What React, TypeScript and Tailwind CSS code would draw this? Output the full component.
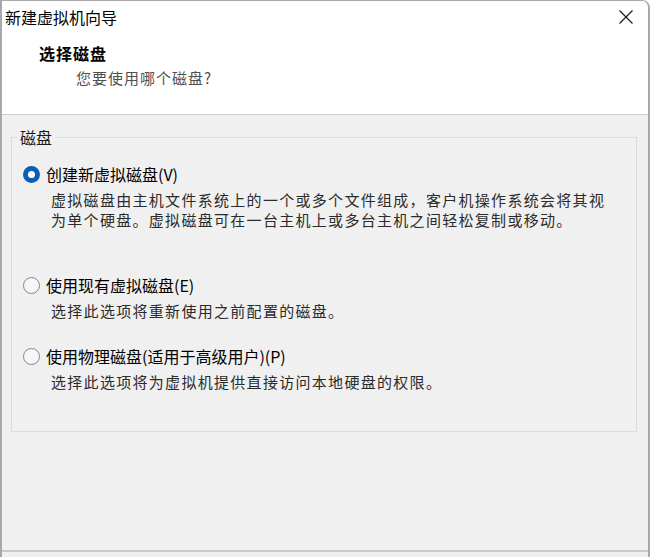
import { useState } from 'react'

type Choice = {
  id: string
  label: string
  desc: string[]
}

const choices: Choice[] = [
  {
    id: 'new',
    label: '创建新虚拟磁盘(V)',
    desc: [
      '虚拟磁盘由主机文件系统上的一个或多个文件组成，客户机操作系统会将其视',
      '为单个硬盘。虚拟磁盘可在一台主机上或多台主机之间轻松复制或移动。',
    ],
  },
  {
    id: 'existing',
    label: '使用现有虚拟磁盘(E)',
    desc: ['选择此选项将重新使用之前配置的磁盘。'],
  },
  {
    id: 'physical',
    label: '使用物理磁盘(适用于高级用户)(P)',
    desc: ['选择此选项将为虚拟机提供直接访问本地硬盘的权限。'],
  },
]

// gap above each radio row, taken from the screenshot
const rowTop: Record<string, string> = {
  new: 'mt-0',
  existing: 'mt-[44px]',
  physical: 'mt-[24px]',
}

function Radio({ checked }: { checked: boolean }) {
  return checked ? (
    <span className="w-[17px] h-[17px] rounded-full bg-[#0a5fb4] flex items-center justify-center shrink-0">
      <span className="w-[7px] h-[7px] rounded-full bg-white" />
    </span>
  ) : (
    <span className="w-[17px] h-[17px] rounded-full border border-[#858585] bg-[#f7f7f7] shrink-0" />
  )
}

export default function App() {
  const [selected, setSelected] = useState('new')

  return (
    <div
      className="w-[650px] h-[557px] flex flex-col bg-[#f0f0f0] border-l-2 border-r-2 border-t border-[#a8a8a8] rounded-tr-[8px] overflow-hidden text-black"
      style={{ fontFamily: '"Noto Sans CJK SC", "Noto Sans", sans-serif' }}
    >
      {/* Header */}
      <div className="h-[114px] bg-white border-b border-[#cfcfcf] relative shrink-0">
        <div className="flex items-center justify-between h-[32px] pl-[3px] pr-[14px]">
          <span className="text-[16px] leading-[22px]">新建虚拟机向导</span>
          <svg width="16" height="16" viewBox="0 0 16 16" className="text-[#1a1a1a]">
            <path d="M1.5 1.5 L14.5 14.5 M14.5 1.5 L1.5 14.5" stroke="currentColor" strokeWidth="1.2" fill="none" />
          </svg>
        </div>
        <div className="pl-[37px] mt-[9px] text-[16px] leading-[22px] font-bold tracking-[1px]">选择磁盘</div>
        <div className="pl-[74px] mt-[3px] text-[15px] leading-[22px] tracking-[1px] text-[#505050]">
          您要使用哪个磁盘?
        </div>
      </div>

      {/* Body */}
      <div className="flex-1 flex flex-col">
        <fieldset className="mt-[11px] ml-[9px] w-[626px] border border-[#dcdcdc] pt-[15px] pb-[39px] px-0">
          <legend className="ml-[5px] px-[3px] text-[16px] leading-[22px] text-[#1a1a1a]">磁盘</legend>

          {choices.map(c => (
            <div key={c.id} className={rowTop[c.id]}>
              <button
                type="button"
                onClick={() => setSelected(c.id)}
                className="flex items-center gap-[6px] pl-[11px] h-[22px] cursor-default"
              >
                <Radio checked={selected === c.id} />
                <span className="text-[16px] leading-[22px]">{c.label}</span>
              </button>
              <div className="pl-[39px] mt-[5px] text-[15px] leading-[20px] tracking-[1.3px] text-[#2b2b2b]">
                {c.desc.map(line => (
                  <div key={line}>{line}</div>
                ))}
              </div>
            </div>
          ))}
        </fieldset>

        <div className="flex-1" />
        <div className="h-[7px] border-t-2 border-[#c9c9c9]" />
      </div>
    </div>
  )
}
